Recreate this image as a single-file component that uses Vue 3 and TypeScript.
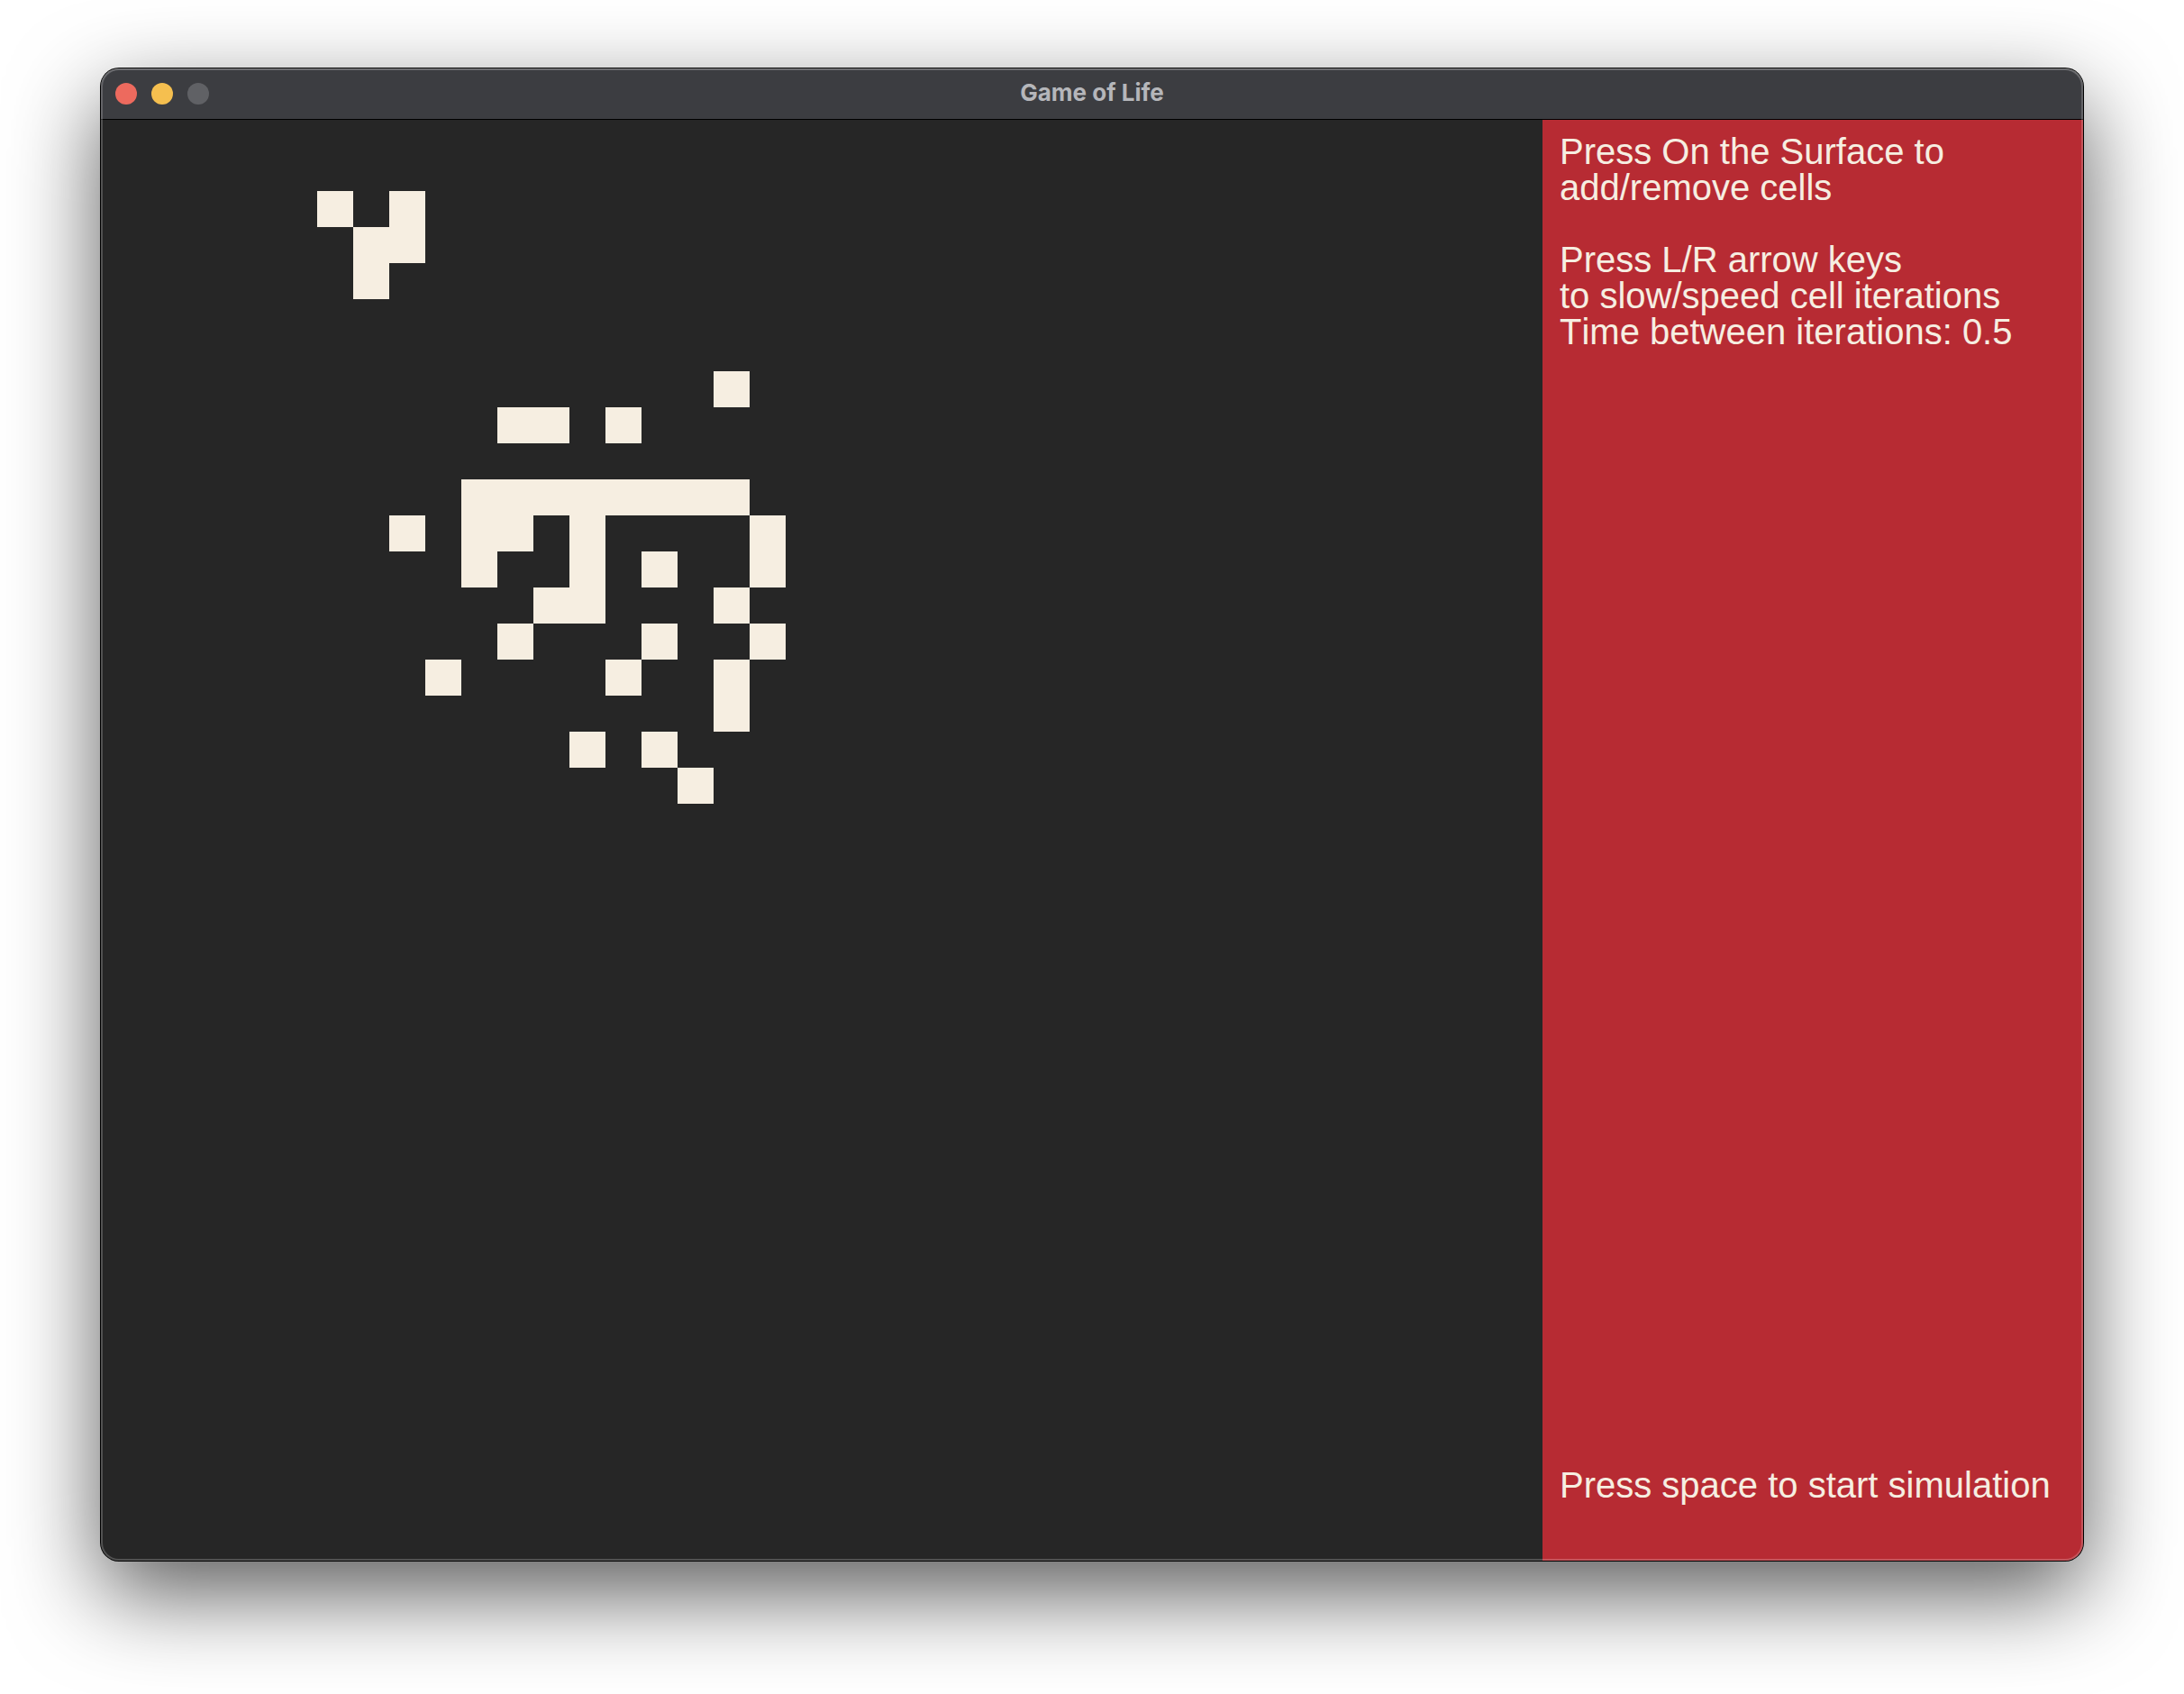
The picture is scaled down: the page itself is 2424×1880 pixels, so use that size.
<script setup lang="ts">
import { onBeforeUnmount, onMounted, ref } from 'vue'

const SIZE = 40

// Live columns, listed by row
const pattern: Record<number, number[]> = {
  2: [6, 8],
  3: [7, 8],
  4: [7],
  7: [17],
  8: [11, 12, 14],
  10: [10, 11, 12, 13, 14, 15, 16, 17],
  11: [8, 10, 11, 13, 18],
  12: [10, 13, 15, 18],
  13: [12, 13, 17],
  14: [11, 15, 18],
  15: [9, 14, 17],
  16: [17],
  17: [13, 15],
  18: [16],
}

const live = ref<Set<number>>(
  new Set(Object.entries(pattern).flatMap(([row, cols]) => cols.map((col) => Number(row) * SIZE + col))),
)
const delay = ref(0.5)
const running = ref(false)
let timer: number | undefined

function toggle(event: MouseEvent) {
  const box = (event.currentTarget as HTMLElement).getBoundingClientRect()
  const col = Math.floor(((event.clientX - box.left) / box.width) * SIZE)
  const row = Math.floor(((event.clientY - box.top) / box.height) * SIZE)
  const next = new Set(live.value)
  const key = row * SIZE + col
  if (!next.delete(key)) next.add(key)
  live.value = next
}

function step() {
  const counts = new Map<number, number>()
  for (const key of live.value) {
    const row = Math.floor(key / SIZE)
    const col = key % SIZE
    for (let r = row - 1; r <= row + 1; r++) {
      for (let c = col - 1; c <= col + 1; c++) {
        if (r < 0 || c < 0 || r >= SIZE || c >= SIZE || (r === row && c === col)) continue
        counts.set(r * SIZE + c, (counts.get(r * SIZE + c) ?? 0) + 1)
      }
    }
  }
  const next = new Set<number>()
  counts.forEach((n, key) => {
    if (n === 3 || (n === 2 && live.value.has(key))) next.add(key)
  })
  live.value = next
}

function tick() {
  step()
  timer = window.setTimeout(tick, delay.value * 1000)
}

function onKey(event: KeyboardEvent) {
  if (event.key === 'ArrowLeft') delay.value = Math.min(2, Math.round(delay.value * 10 + 1) / 10)
  if (event.key === 'ArrowRight') delay.value = Math.max(0.1, Math.round(delay.value * 10 - 1) / 10)
  if (event.key === ' ') {
    event.preventDefault()
    running.value = !running.value
    window.clearTimeout(timer)
    if (running.value) tick()
  }
}

onMounted(() => window.addEventListener('keydown', onKey))
onBeforeUnmount(() => {
  window.removeEventListener('keydown', onKey)
  window.clearTimeout(timer)
})
</script>

<template>
  <div class="desktop">
    <section class="window">
      <header class="titlebar">
        <div class="lights">
          <button class="light close" type="button" aria-label="Close"></button>
          <button class="light minimise" type="button" aria-label="Minimise"></button>
          <button class="light zoom" type="button" aria-label="Zoom" disabled></button>
        </div>
        <h1 class="title">Game of Life</h1>
      </header>
      <main class="content">
        <div class="board" @click="toggle">
          <div
            v-for="key in live"
            :key="key"
            class="cell"
            :style="{ gridColumn: (key % SIZE) + 1, gridRow: Math.floor(key / SIZE) + 1 }"
          ></div>
        </div>
        <aside class="panel">
          <div>
            <p>Press On the Surface to<br />add/remove cells</p>
            <p>
              Press L/R arrow keys<br />to slow/speed cell iterations<br />Time between iterations:
              {{ delay.toFixed(1) }}
            </p>
          </div>
          <p>Press space to {{ running ? 'stop' : 'start' }} simulation</p>
        </aside>
      </main>
    </section>
  </div>
</template>

<style>
body {
  margin: 0;
  background: #fff;
}
</style>

<style scoped>
.desktop {
  padding: 76px 112px 148px;
  overflow: hidden;
}

.window {
  position: relative;
  border-radius: 20px;
  background: #262626;
  box-shadow:
    0 0 0 1px #000,
    0 36px 100px rgba(0, 0, 0, 0.65);
}

/* Light rim drawn over the window's edge */
.window::after {
  content: '';
  position: absolute;
  inset: 0;
  border-radius: 20px;
  box-shadow:
    inset 0 0 0 2px rgba(255, 255, 255, 0.2),
    inset 0 1px 0 rgba(255, 255, 255, 0.2);
  pointer-events: none;
}

.titlebar {
  position: relative;
  display: grid;
  grid-template-columns: 1fr auto 1fr;
  align-items: center;
  height: 56px;
  padding: 0 16px;
  border-radius: 20px 20px 0 0;
  background: #3c3d41;
  box-shadow: 0 1px 0 #000;
}

.lights {
  display: flex;
  gap: 16px;
}

.light {
  width: 24px;
  height: 24px;
  padding: 0;
  border: 0;
  border-radius: 50%;
}

.close {
  background: #ed6a5e;
}

.minimise {
  background: #f5bf4f;
}

.zoom {
  background: #606165;
}

.title {
  margin: 0;
  padding-bottom: 2px;
  font: 700 26px/32px Inter, sans-serif;
  color: #b5b6ba;
}

.content {
  display: grid;
  grid-template-columns: 8fr 3fr;
}

.board {
  display: grid;
  grid-template-columns: repeat(40, 1fr);
  grid-template-rows: repeat(40, 1fr);
  aspect-ratio: 1;
}

.cell {
  background: #f6eee1;
}

.panel {
  display: flex;
  flex-direction: column;
  justify-content: space-between;
  padding: 16px 0 64px 19px;
  border-radius: 0 0 20px 0;
  background: #b72b33;
  color: #f6eee1;
  font: 40px/40px "Liberation Sans", Arial, sans-serif;
  font-kerning: none;
  white-space: nowrap;
}

.panel p {
  margin: 0 0 40px;
}

.panel > p {
  margin: 0;
}
</style>
